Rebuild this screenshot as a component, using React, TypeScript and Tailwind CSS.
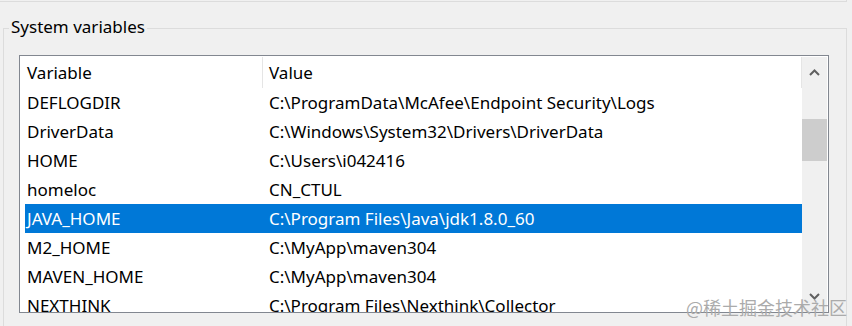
import React from "react";

const rows: [string, string][] = [
  ["DEFLOGDIR", "C:\\ProgramData\\McAfee\\Endpoint Security\\Logs"],
  ["DriverData", "C:\\Windows\\System32\\Drivers\\DriverData"],
  ["HOME", "C:\\Users\\i042416"],
  ["homeloc", "CN_CTUL"],
  ["JAVA_HOME", "C:\\Program Files\\Java\\jdk1.8.0_60"],
  ["M2_HOME", "C:\\MyApp\\maven304"],
  ["MAVEN_HOME", "C:\\MyApp\\maven304"],
  ["NEXTHINK", "C:\\Program Files\\Nexthink\\Collector"],
];

function Chevron({ up }: { up: boolean }) {
  return (
    <svg width="11" height="7" viewBox="0 0 11 7">
      <polyline
        points={up ? "1,6 5.5,1.5 10,6" : "1,1 5.5,5.5 10,1"}
        fill="none"
        stroke="#606060"
        strokeWidth="2"
      />
    </svg>
  );
}

export default function App() {
  return (
    <div
      className="relative w-[852px] h-[326px] overflow-hidden bg-[#f0f0f0] text-black"
      style={{ fontFamily: '"Noto Sans", "Open Sans", sans-serif' }}
    >
      <div className="h-[2px] w-[847px] border-b border-r border-[#dcdcdc]" />
      <div className="relative ml-[3px] mt-[26px] h-[320px] w-[844px] border-l border-r border-t border-[#dcdcdc]">
        <div className="absolute left-[5px] top-[-15px] bg-[#f0f0f0] px-[2px] text-[17px] leading-[26px]">
          System variables
        </div>
        <div className="ml-[15px] mt-[26px] flex h-[258px] w-[810px] border border-[#828790] bg-white pt-[1px] pr-[1px]">
          <div className="flex-1 overflow-hidden pl-[5px] text-[17px]">
            <div className="flex h-[31px] items-center">
              <div className="w-[237px] pl-[2px]">Variable</div>
              <div className="h-full w-px bg-[#e5e5e5]" />
              <div className="flex-1 pl-[6px]">Value</div>
              <div className="h-full w-px bg-[#e5e5e5]" />
            </div>
            {rows.map(([k, v]) => {
              const sel = k === "JAVA_HOME";
              return (
                <div
                  key={k}
                  className={`flex h-[29px] items-center whitespace-nowrap ${
                    sel ? "bg-[#0078d7] text-white" : ""
                  }`}
                >
                  <div className="w-[238px] pl-[2px]">{k}</div>
                  <div className="flex-1 pl-[6px]">{v}</div>
                </div>
              );
            })}
          </div>
          <div className="flex w-[25px] flex-col bg-[#f0f0f0]">
            <div className="flex h-[30px] items-center justify-center pt-[1px]">
              <Chevron up />
            </div>
            <div className="h-[32px]" />
            <div className="h-[42px] bg-[#cdcdcd]" />
            <div className="flex-1" />
            <div className="flex h-[30px] items-center justify-center pb-[2px]">
              <Chevron up={false} />
            </div>
          </div>
        </div>
      </div>
      <div
        className="absolute right-[5px] top-[296px] text-[18px] leading-[22px] text-[#ababab]"
        style={{ fontFamily: '"Noto Sans CJK SC", sans-serif' }}
      >
        @稀土掘金技术社区
      </div>
    </div>
  );
}
